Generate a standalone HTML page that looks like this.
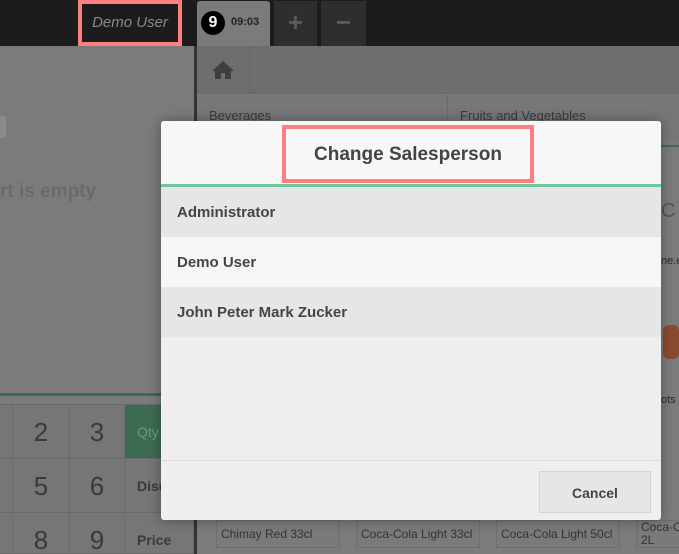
<!DOCTYPE html>
<html style="overflow:hidden;width:679px;height:554px"><head><style>
*{margin:0;padding:0;box-sizing:border-box}
body{width:679px;height:554px;overflow:hidden;position:relative;background:#7b7b7b;font-family:"Liberation Sans",sans-serif}
.a{position:absolute}
.nb{position:absolute;border:1px solid #6a6a6a;background:#767676;color:#3a3a3a;font-size:26px;text-align:center}
.card{position:absolute;top:520px;height:28px;width:124px;background:#7a7a7a;border:1px solid #6e6e6e;color:#333;font-size:12px;padding:6px 0 0 4px}
</style></head><body>
<div class="a" style="left:0;top:0;width:679px;height:46px;background:#1c1c1c"></div>
<div class="a" style="left:78px;top:0;width:104px;height:46px;border:4px solid #ff7f7f;background:#1c1c1c;color:#8a8a8a;font-style:italic;font-size:15px;text-align:center;line-height:38px">Demo User</div>
<div class="a" style="left:197px;top:1px;width:73px;height:45px;background:#7b7b7b;border-radius:3px 3px 0 0"></div>
<div class="a" style="left:201px;top:11px;width:24px;height:24px;border-radius:50%;background:#000;color:#fff;font-weight:bold;font-size:16px;text-align:center;line-height:24px">9</div>
<div class="a" style="left:231px;top:16px;color:#222;font-weight:bold;font-size:11px">09:03</div>
<div class="a" style="left:274px;top:1px;width:43px;height:45px;background:#2e2e2e;color:#5a5a5a;font-size:26px;font-weight:bold;text-align:center;line-height:42px">+</div>
<div class="a" style="left:321px;top:1px;width:45px;height:45px;background:#2e2e2e;color:#5a5a5a;font-size:26px;font-weight:bold;text-align:center;line-height:42px">−</div>
<div class="a" style="left:194px;top:46px;width:3px;height:508px;background:#333"></div>
<div class="a" style="left:197px;top:46px;width:482px;height:48px;background:#6e6e6e;border-bottom:1px solid #666"></div>
<div class="a" style="left:249px;top:46px;width:1px;height:48px;background:#666"></div>
<svg class="a" style="left:211px;top:60px" width="24" height="20" viewBox="0 0 24 20"><path d="M12 1L1 11h3v8h6v-6h4v6h6v-8h3z" fill="#3e3e3e"/></svg>
<div class="a" style="left:197px;top:95px;width:482px;height:46px;background:#777"></div>
<div class="a" style="left:447px;top:95px;width:1px;height:46px;background:#6a6a6a"></div>
<div class="a" style="left:209px;top:108px;color:#3a3a3a;font-size:13px">Beverages</div>
<div class="a" style="left:460px;top:108px;color:#3a3a3a;font-size:13px">Fruits and Vegetables</div>
<div class="a" style="left:0;top:116px;width:6px;height:22px;background:#8a8a8a;border-radius:0 3px 3px 0"></div>
<div class="a" style="left:0;top:181px;color:#6a6a6a;font-size:19px;font-weight:bold">rt is empty</div>
<div class="a" style="left:0;top:393px;width:194px;height:3px;background:#3c6a52"></div>
<div class="nb" style="left:-1px;top:404px;width:14px;height:55px"></div>
<div class="nb" style="left:12px;top:404px;width:58px;height:55px;line-height:55px">2</div>
<div class="nb" style="left:69px;top:404px;width:56px;height:55px;line-height:55px">3</div>
<div class="nb" style="left:124px;top:404px;width:70px;height:55px;background:#3d6b52;color:#6c9a80;font-size:14px;line-height:55px;text-align:left;padding-left:12px">Qty</div>
<div class="nb" style="left:-1px;top:458px;width:14px;height:55px"></div>
<div class="nb" style="left:12px;top:458px;width:58px;height:55px;line-height:55px">5</div>
<div class="nb" style="left:69px;top:458px;width:56px;height:55px;line-height:55px">6</div>
<div class="nb" style="left:124px;top:458px;width:70px;height:55px;font-size:14px;line-height:55px;text-align:left;padding-left:12px;font-weight:bold">Disc</div>
<div class="nb" style="left:-1px;top:512px;width:14px;height:42px"></div>
<div class="nb" style="left:12px;top:512px;width:58px;height:42px;line-height:55px">8</div>
<div class="nb" style="left:69px;top:512px;width:56px;height:42px;line-height:55px">9</div>
<div class="nb" style="left:124px;top:512px;width:70px;height:42px;font-size:14px;line-height:55px;text-align:left;padding-left:12px;font-weight:bold">Price</div>
<div class="card" style="left:216px">Chimay Red 33cl</div>
<div class="card" style="left:356px">Coca-Cola Light 33cl</div>
<div class="card" style="left:496px">Coca-Cola Light 50cl</div>
<div class="card" style="left:636px;padding-top:0;line-height:13px">Coca-Co<br>2L</div>
<div class="a" style="left:661px;top:145px;width:18px;height:2px;background:#3c6a52"></div>
<div class="a" style="left:661px;top:200px;color:#555;font-size:20px">C</div>
<div class="a" style="left:661px;top:255px;color:#2a2a2a;font-size:11px">ne.e</div>
<div class="a" style="left:663px;top:325px;width:16px;height:34px;background:#8a4a30;border-radius:6px"></div>
<div class="a" style="left:661px;top:394px;color:#2a2a2a;font-size:11px">ots</div>
<div class="a" style="left:161px;top:121px;width:500px;height:399px;background:#f0eeee;border-radius:3px;box-shadow:0 0 12px rgba(0,0,0,.35);overflow:hidden">
 <div class="a" style="left:0;top:0;width:500px;height:66px;background:#f7f7f7;border-bottom:3px solid #6ec89b"></div>
 <div class="a" style="left:121px;top:4px;width:252px;height:58px;border:4px solid #ff7f7f;color:#444;font-weight:bold;font-size:19px;text-align:center;line-height:52px">Change Salesperson</div>
 <div class="a" style="left:0;top:66px;width:500px;height:50px;background:#e6e6e6;color:#444;font-weight:bold;font-size:15px;line-height:52px;padding-left:16px">Administrator</div>
 <div class="a" style="left:0;top:116px;width:500px;height:50px;background:#f6f6f6;color:#444;font-weight:bold;font-size:15px;line-height:52px;padding-left:16px">Demo User</div>
 <div class="a" style="left:0;top:166px;width:500px;height:50px;background:#e6e6e6;color:#444;font-weight:bold;font-size:15px;line-height:52px;padding-left:16px">John Peter Mark Zucker</div>
 <div class="a" style="left:0;top:339px;width:500px;height:1px;background:#ddd"></div>
 <div class="a" style="left:378px;top:350px;width:112px;height:42px;background:#e6e6e6;border:1px solid #d2d2d2;color:#444;font-weight:bold;font-size:14px;text-align:center;line-height:42px">Cancel</div>
</div>
</body></html>
